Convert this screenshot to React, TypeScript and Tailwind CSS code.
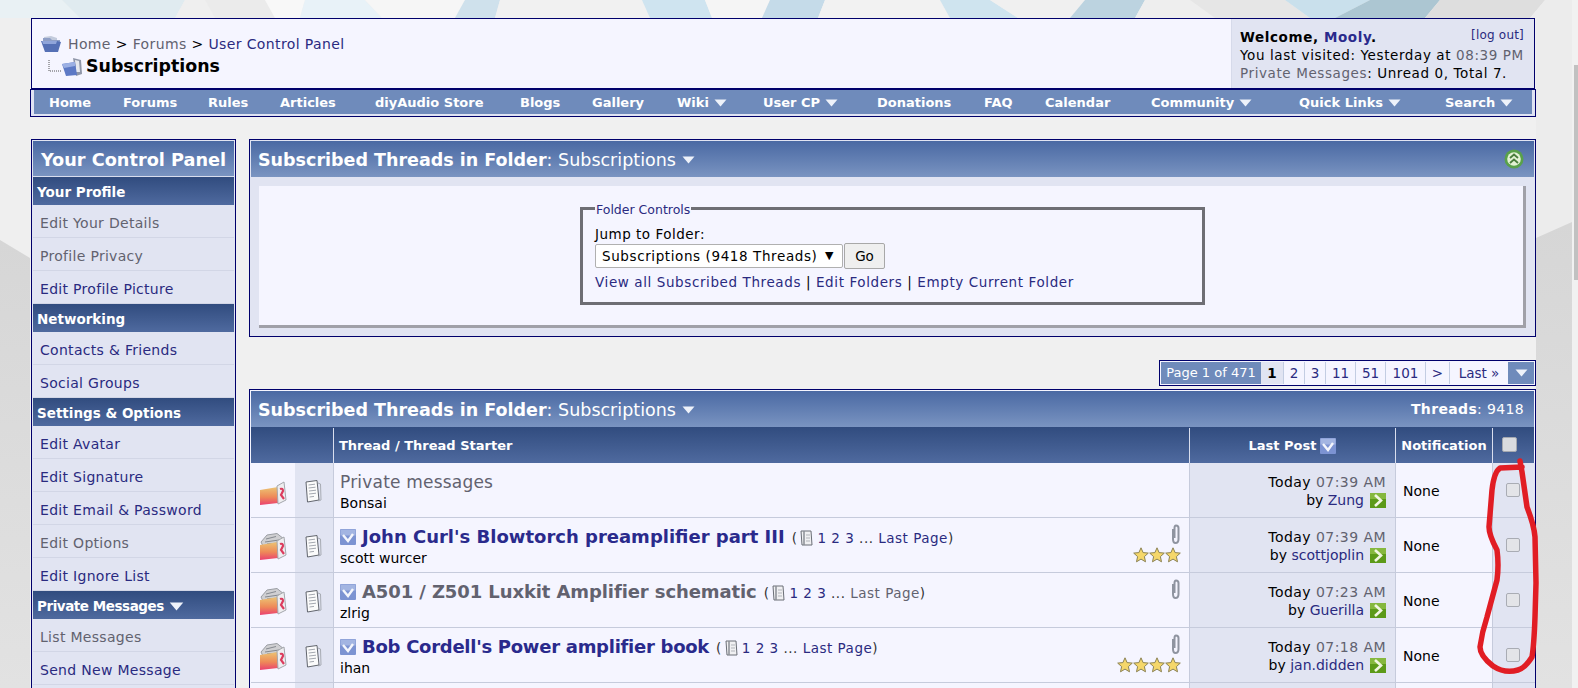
import React from 'react';

const bgStripes: [string, string][] = [
  ['0,0 62,0 80,18 0,18', '#e9f1f4'],
  ['62,0 185,0 175,18 80,18', '#e0ebf0'],
  ['185,0 205,0 215,18 175,18', '#efefef'],
  ['205,0 265,0 275,18 215,18', '#ebebeb'],
  ['265,0 305,0 300,18 275,18', '#f8f8f8'],
  ['305,0 365,0 382,18 300,18', '#e8f2f8'],
  ['365,0 465,0 455,18 382,18', '#f6f6f6'],
  ['465,0 500,0 495,18 455,18', '#cfe1ec'],
  ['500,0 642,0 650,18 495,18', '#f1f1f1'],
  ['642,0 705,0 712,18 650,18', '#cfe4f0'],
  ['705,0 770,0 762,18 712,18', '#f5f5f5'],
  ['770,0 825,0 818,18 762,18', '#c5dbe9'],
  ['825,0 940,0 950,18 818,18', '#f2f2f2'],
  ['940,0 990,0 1018,18 950,18', '#cfe4ef'],
  ['990,0 1085,0 1070,18 1018,18', '#f0f0f0'],
  ['1085,0 1145,0 1135,18 1070,18', '#bcd3e0'],
  ['1145,0 1190,0 1215,18 1135,18', '#eeeeee'],
  ['1190,0 1285,0 1310,18 1215,18', '#e6e6e6'],
  ['1285,0 1370,0 1335,18 1310,18', '#c9e0ec'],
  ['1370,0 1440,0 1425,18 1335,18', '#acc6d2'],
  ['1440,0 1545,0 1530,18 1425,18', '#dedede'],
  ['1545,0 1572,0 1572,18 1530,18', '#ececec'],
];

const navItems = [
  { label: 'Home', width: 'w-[74px]' },
  { label: 'Forums', width: 'w-[85px]' },
  { label: 'Rules', width: 'w-[72px]' },
  { label: 'Articles', width: 'w-[95px]' },
  { label: 'diyAudio Store', width: 'w-[145px]' },
  { label: 'Blogs', width: 'w-[72px]' },
  { label: 'Gallery', width: 'w-[85px]' },
  { label: 'Wiki', width: 'w-[86px]', menu: true },
  { label: 'User CP', width: 'w-[114px]', menu: true },
  { label: 'Donations', width: 'w-[107px]' },
  { label: 'FAQ', width: 'w-[61px]' },
  { label: 'Calendar', width: 'w-[106px]' },
  { label: 'Community', width: 'w-[148px]', menu: true },
  { label: 'Quick Links', width: 'w-[146px]', menu: true },
  { label: 'Search', width: 'w-[86px]', menu: true },
];

const sideGroups = [
  {
    title: 'Your Profile',
    items: [
      { label: 'Edit Your Details', seen: true },
      { label: 'Profile Privacy', seen: true },
      { label: 'Edit Profile Picture' },
    ],
  },
  {
    title: 'Networking',
    items: [{ label: 'Contacts & Friends' }, { label: 'Social Groups' }],
  },
  {
    title: 'Settings & Options',
    items: [
      { label: 'Edit Avatar' },
      { label: 'Edit Signature' },
      { label: 'Edit Email & Password' },
      { label: 'Edit Options', seen: true },
      { label: 'Edit Ignore List' },
    ],
  },
  {
    title: 'Private Messages',
    menu: true,
    items: [{ label: 'List Messages', seen: true }, { label: 'Send New Message' }, { label: '\u00a0' }],
  },
];

const pageCells = [
  { label: '2', width: 'w-[21px]' },
  { label: '3', width: 'w-[21px]' },
  { label: '11', width: 'w-[30px]' },
  { label: '51', width: 'w-[30px]' },
  { label: '101', width: 'w-[40px]' },
  { label: '>', width: 'w-[24px]' },
  { label: 'Last »', width: 'w-[59px]' },
];

const threads = [
  { title: 'Private messages', starter: 'Bonsai', time: '07:39 AM', by: 'Zung', plain: true, seen: true, stars: 0, clip: false, fit: '' },
  { title: "John Curl's Blowtorch preamplifier part III", starter: 'scott wurcer', time: '07:39 AM', by: 'scottjoplin', stars: 3, clip: true, fit: '' },
  { title: 'A501 / Z501 Luxkit Amplifier schematic', starter: 'zlrig', time: '07:23 AM', by: 'Guerilla', seen: true, stars: 0, clip: true, fit: 'tracking-[-0.1px]' },
  { title: "Bob Cordell's Power amplifier book", starter: 'ihan', time: '07:18 AM', by: 'jan.didden', stars: 4, clip: true, fit: 'tracking-[-0.27px]' },
];

const Arrow = ({ className = 'w-[13px] h-[8px]' }: { className?: string }) => (
  <svg className={className} viewBox="0 0 13 8">
    <path d="M0.5 0.5 H12.5 L6.5 7.5 Z" fill="#eef2fa" />
  </svg>
);

const FolderOpen = ({ className }: { className: string }) => (
  <svg className={className} viewBox="0 0 20 17">
    <path d="M3 1 L10 0 L16 2 V10 H3 Z" fill="#c3cbdc" />
    <path d="M2 2 H9 L11 4 H19 V8 H2 Z" fill="#8f9fc6" />
    <path d="M0 5 H16 L20 6 L17 16 H4 Z" fill="#5570b5" />
    <path d="M1 5 H16 L15 8 H2 Z" fill="#90a5da" />
  </svg>
);

const FolderSub = ({ className }: { className: string }) => (
  <svg className={className} viewBox="0 0 22 20">
    <path d="M12 1 L20 3 L21 17 L15 19 Z" fill="#8f96a8" />
    <path d="M14 3 L18 4 L19 15 L15 15 Z" fill="#e6e8ee" />
    <path d="M1 7 L14 5 L16 18 L5 19 Z" fill="#5d79c5" />
    <path d="M1 7 L14 5 L14 9 L3 11 Z" fill="#9cb0e4" />
  </svg>
);

const StatusIcon = ({ plain }: { plain?: boolean }) => (
  <svg className="w-[28px] h-[27px]" viewBox="0 0 28 27">
    <defs>
      <linearGradient id="mail" x1="0" y1="0" x2="0" y2="1">
        <stop offset="0" stopColor="#ecc474" />
        <stop offset="0.55" stopColor="#ee8a58" />
        <stop offset="1" stopColor="#ea4070" />
      </linearGradient>
    </defs>
    {!plain && <path d="M2 9 L8 2 L18 0.5 L25 6 L24 13 L4 13 Z" fill="#cfcfd2" stroke="#9a9da3" strokeWidth="1" />}
    {!plain && <path d="M7 6 L17 3.5 M6 9 L20 7 M8 11 L20 10" fill="none" stroke="#85898f" strokeWidth="1" />}
    <path d="M1 12 L19 9 V25 L1 27 Z" fill="url(#mail)" />
    <path d="M18 8 L25 4 L27 22 L19 26 Z" fill="#eeeef0" stroke="#a4a7ad" strokeWidth="1" />
    <path d="M21 11 Q24 10 24 13 L22 17 L25 21" fill="none" stroke="#dc3c5e" strokeWidth="2.2" />
  </svg>
);

const DocIcon = () => (
  <svg className="w-[18px] h-[23px]" viewBox="0 0 18 23">
    <path d="M1 2 L12 0.5 L14 20 L2.5 22 Z" fill="#fbfbfb" stroke="#62666e" strokeWidth="1" />
    <path d="M13 3 L15.5 4 L16 20 L13.5 21" fill="none" stroke="#a8acb4" strokeWidth="1" />
    <path d="M3.5 5 L10 4.2 M3.5 8 L10.5 7.2 M4 11 L11 10.2 M4 14 L11 13.2 M4.5 17 L9 16.4" stroke="#a4a8b0" strokeWidth="1" />
  </svg>
);

const TinyDoc = () => (
  <svg className="inline-block w-[14px] h-[16px] mx-[3px] align-[-3px]" viewBox="0 0 14 16">
    <path d="M1 1 H11 L12 15 H2 Z" fill="#f0f0f2" stroke="#6a6e76" strokeWidth="1" />
    <path d="M4 1 V15" stroke="#8b8f96" strokeWidth="1.5" />
    <path d="M6 5 H10 M6 8 H10 M6 11 H10" stroke="#b2b5bb" strokeWidth="1" />
  </svg>
);

const CheckIcon = ({ className = 'w-[16px] h-[16px]' }: { className?: string }) => (
  <svg className={className} viewBox="0 0 16 16">
    <rect width="16" height="16" rx="1" fill="#7c93d2" />
    <rect x="0.5" y="0.5" width="15" height="6" fill="#a3b5e2" />
    <path d="M3 6 L8 12 L13 5" fill="none" stroke="#f4f6fc" strokeWidth="2.4" />
  </svg>
);

const Star = () => (
  <svg className="w-[16px] h-[16px]" viewBox="0 0 16 16">
    <path
      d="M8 0.8 L10.1 5.6 L15.3 6.1 L11.4 9.6 L12.5 14.8 L8 12.1 L3.5 14.8 L4.6 9.6 L0.7 6.1 L5.9 5.6 Z"
      fill="#f5d76a"
      stroke="#8c8354"
      strokeWidth="1"
    />
  </svg>
);

const Clip = () => (
  <svg className="w-[11px] h-[21px]" viewBox="0 0 11 21">
    <path
      d="M3 5 V15 Q3 19 5.5 19 Q8.5 19 8.5 15 V4 Q8.5 1.5 6 1.5 Q4.5 1.5 4.5 4 V14"
      fill="none"
      stroke="#8f94a0"
      strokeWidth="2"
    />
  </svg>
);

const GoArrow = () => (
  <svg className="w-[16px] h-[15px] shrink-0" viewBox="0 0 16 15">
    <rect width="16" height="15" fill="#5c9a18" />
    <rect width="16" height="6" fill="#86b83e" />
    <path d="M5 2 L11 7.5 L5 13" fill="none" stroke="#f2f6e2" strokeWidth="2.6" />
  </svg>
);

const Collapse = () => (
  <svg className="w-[20px] h-[20px]" viewBox="0 0 20 20">
    <circle cx="10" cy="10" r="9.5" fill="#59a14a" />
    <circle cx="10" cy="10" r="6.8" fill="#e3f2d4" />
    <path d="M6 9 L10 5.5 L14 9 M6 14 L10 10.5 L14 14" fill="none" stroke="#4a7d3c" strokeWidth="1.8" />
  </svg>
);

const Box = ({ dark }: { dark?: boolean }) => (
  <span
    className={
      dark
        ? 'block w-[15px] h-[15px] rounded-[2px] border border-[#a4a8b0] bg-[#d9dbdf]'
        : 'block w-[14px] h-[14px] rounded-[2px] border border-[#a9acb4] bg-[#e3e4e8]'
    }
  />
);

const BarTitle = ({ right }: { right?: React.ReactNode }) => (
  <div className="flex h-[36px] items-center justify-between bg-linear-to-b from-[#4a69a3] to-[#7a94c1] pl-[7px] pr-[10px] text-white">
    <div className="flex items-center gap-[6px] pt-[2px] text-[17.5px]">
      <span>
        <b>Subscribed Threads in Folder</b>: Subscriptions
      </span>
      <Arrow />
    </div>
    {right}
  </div>
);

const Sidebar = () => (
  <aside className="w-[205px] shrink-0 border border-[#00006b] bg-[#e1e4f2] p-px">
    <div className="flex h-[36px] items-center justify-center border-b border-[#d9deee] bg-linear-to-b from-[#4a69a3] to-[#7a94c1] pt-[3px] text-[17.7px] font-bold text-white">
      Your Control Panel
    </div>
    {sideGroups.map((group) => (
      <div key={group.title}>
        <div className="flex h-[28px] items-center gap-[5px] bg-linear-to-b from-[#314c7f] to-[#4f6a9f] pl-[4px] pt-[2px] text-[13.5px] font-bold text-white">
          <span className={group.menu ? 'tracking-[-0.45px]' : ''}>{group.title}</span>
          {group.menu && <Arrow className="w-[15px] h-[9px]" />}
        </div>
        {group.items.map((item) => (
          <div
            key={item.label}
            className={
              item.seen
                ? 'flex h-[33px] items-center border-b border-[#d2d6e6] pl-[7px] pt-[4px] text-[14px] tracking-[0.3px] text-[#62626f]'
                : 'flex h-[33px] items-center border-b border-[#d2d6e6] pl-[7px] pt-[4px] text-[14px] tracking-[0.3px] text-[#2a2a80]'
            }
          >
            {item.label}
          </div>
        ))}
      </div>
    ))}
  </aside>
);

const Pager = () => (
  <div className="flex h-[26px] self-end border border-[#00006b] bg-[#f5f5ff] p-px text-[13.5px]">
    <div className="flex w-[100px] items-center justify-center bg-[#6f8bbb] text-[13px] text-white">Page 1 of 471</div>
    <div className="flex w-[22px] items-center justify-center bg-[#e1e4f2] font-bold text-black">1</div>
    {pageCells.map((cell) => (
      <div key={cell.label} className={`${cell.width} flex items-center justify-center border-l border-[#c3cde2] text-[#2a2a80]`}>
        {cell.label}
      </div>
    ))}
    <div className="flex w-[26px] items-center justify-center bg-[#6f8bbb]">
      <Arrow />
    </div>
  </div>
);

const rowGrid = 'grid grid-cols-[44px_38px_856px_206px_97px_43px]';

const ThreadRow = ({ thread }: { thread: (typeof threads)[number] }) => (
  <div className={`${rowGrid} h-[55px] text-[14px]`}>
    <div className="flex items-center justify-center border-b border-[#c6cbdc] pt-[3px]">
      <StatusIcon plain={thread.plain} />
    </div>
    <div className="flex items-center justify-center border-b border-[#c6cbdc] bg-[#e1e4f2] pt-[3px]">
      <DocIcon />
    </div>
    <div className="flex items-start justify-between border-b border-l border-[#c6cbdc] pl-[6px] pr-[8px] pt-[6px]">
      <div>
        <div className="flex h-[24px] items-center pt-[1px]">
          {!thread.plain && <CheckIcon className="mr-[6px] w-[16px] h-[16px]" />}
          {thread.plain ? (
            <span className="pt-[3px] text-[17px] tracking-[0.2px] text-[#62626f]">{thread.title}</span>
          ) : (
            <span className={thread.seen ? `text-[18px] font-bold text-[#62626f] ${thread.fit}` : `text-[18px] font-bold text-[#2a2a8c] ${thread.fit}`}>
              {thread.title}
            </span>
          )}
          {!thread.plain && (
            <span className="ml-[7px] pt-[4px] text-[13.5px] tracking-[0.5px] text-[#333]">
              (<TinyDoc />
              <span className="text-[#2a2a80]">1 2 3</span> ...{' '}
              <span className={thread.seen ? 'text-[#62626f]' : 'text-[#2a2a80]'}>Last Page</span>)
            </span>
          )}
        </div>
        <div className="text-[14px] leading-[20px] text-black">{thread.starter}</div>
      </div>
      <div className="flex flex-col items-end">
        {thread.clip && <Clip />}
        {thread.stars > 0 && (
          <div className="flex pt-[2px]">
            {Array.from({ length: thread.stars }).map((_, i) => (
              <Star key={i} />
            ))}
          </div>
        )}
      </div>
    </div>
    <div className="flex flex-col items-end justify-center border-b border-l border-[#c6cbdc] bg-[#e1e4f2] pr-[9px] pt-[2px] leading-[18px]">
      <div className="tracking-[0.45px] text-black">
        Today <span className="text-[#62626f]">{thread.time}</span>
      </div>
      <div className="flex items-center gap-[6px]">
        <span className="text-black">
          by <span className="text-[#2a2a80]">{thread.by}</span>
        </span>
        <GoArrow />
      </div>
    </div>
    <div className="flex items-center border-b border-l border-[#c6cbdc] pl-[7px] pt-[3px] text-black">None</div>
    <div className="flex items-center justify-center border-b border-l border-[#c6cbdc] bg-[#e1e4f2] pr-[3px]">
      <Box />
    </div>
  </div>
);

const App = () => (
  <div className="flex h-[688px] w-[1578px] overflow-hidden font-['DejaVu_Sans',sans-serif] text-[14px]">
    <div className="relative w-[1572px] bg-[#ebebeb]">
      {/* page wallpaper */}
      <svg className="absolute inset-0 w-[1572px] h-[688px]" viewBox="0 0 1572 688">
        <defs>
          <linearGradient id="wall" x1="0" y1="0" x2="0" y2="1">
            <stop offset="0" stopColor="#d6d6d6" />
            <stop offset="1" stopColor="#e2e2e2" />
          </linearGradient>
        </defs>
        <rect width="1572" height="688" fill="#efefef" />
        <rect x="1536" y="0" width="36" height="240" fill="#ececec" />
        <polygon points="0,240 30,258 30,688 0,688" fill="url(#wall)" />
        <polygon points="1536,238 1572,222 1572,688 1536,688" fill="url(#wall)" />
        {bgStripes.map(([points, fill]) => (
          <polygon key={points} points={points} fill={fill} />
        ))}
      </svg>

      <div className="relative ml-[30px] mr-[36px] mt-[18px] h-[670px] bg-[#f0f0f0]">
        <header className="ml-px mr-px flex h-[71px] border border-[#00006b] bg-[#f5f5ff]">
          <div className="flex-1 pl-[9px] pt-[15px]">
            <div className="flex h-[21px] items-center gap-[7px] text-[14px] tracking-[0.38px] text-[#62626f]">
              <FolderOpen className="w-[20px] h-[17px]" />
              <span>
                Home <span className="text-black">&gt;</span> Forums <span className="text-black">&gt;</span>{' '}
                <span className="text-[#2a2a80]">User Control Panel</span>
              </span>
            </div>
            <div className="flex h-[23px] items-center pl-[7px] text-[17.4px] font-bold text-black">
              <svg className="w-[13px] h-[16px]" viewBox="0 0 13 16">
                <path d="M1 1 V12 H13" fill="none" stroke="#555" strokeDasharray="1 1" />
              </svg>
              <FolderSub className="w-[22px] h-[20px] mr-[3px]" />
              Subscriptions
            </div>
          </div>
          <div className="relative w-[303px] border-l border-[#d6daea] bg-[#e1e4f2] pl-[8px] pt-[9px] text-[13.5px] leading-[18px] tracking-[0.6px] text-black">
            <span className="absolute right-[10px] top-[7px] text-[12px] tracking-[0.2px] text-[#2a2a80]">[log out]</span>
            <div className="font-bold">
              Welcome, <span className="text-[#2a2a8c]">Mooly</span>.
            </div>
            <div>
              You last visited: Yesterday at <span className="text-[#62626f]">08:39 PM</span>
            </div>
            <div>
              <span className="text-[#62626f]">Private Messages</span>: Unread 0, Total 7.
            </div>
          </div>
        </header>

        <nav className="flex h-[28px] border border-[#00006b] bg-[#dfe3f3] pb-[2px] pl-[3px] pr-[3px]">
          <div className="flex flex-1 items-center bg-[#6f8bbb] pl-[15px] pt-[2px] text-[13px] font-bold text-white">
            {navItems.map((item) => (
              <div key={item.label} className={`${item.width} flex shrink-0 items-center gap-[5px]`}>
                {item.label}
                {item.menu && <Arrow />}
              </div>
            ))}
          </div>
        </nav>

        <div className="mt-[22px] flex">
          <div className="ml-px">
            <Sidebar />
          </div>
          <main className="ml-[13px] flex w-[1287px] flex-col">
            <section className="h-[198px] border border-[#00006b] bg-[#e1e4f2] p-px">
              <BarTitle right={<Collapse />} />
              <div className="mx-[8px] mt-[9px] h-[142px] border-b-[3px] border-r-[3px] border-b-[#a0a0a8] border-r-[#a0a0a8] bg-[#f5f5ff] pt-[13px]">
                <fieldset className="ml-[321px] h-[106px] w-[625px] border-[3px] border-[#6e6e74] px-[12px] pt-[5px]">
                  <legend className="px-[1px] text-[12.5px] text-[#2a2a80]">
                    <span className="inline-block translate-y-[2px]">Folder Controls</span>
                  </legend>
                  <div className="pt-[2px] text-[13.5px] leading-[18px] tracking-[0.5px] text-black">Jump to Folder:</div>
                  <div className="flex items-center">
                    <div className="flex h-[24px] w-[248px] items-center justify-between rounded-[2px] border border-[#b0b0b0] bg-white pl-[6px] pr-[8px] text-[13.5px] tracking-[0.6px] text-black">
                      Subscriptions (9418 Threads)
                      <span className="text-[11px]">▼</span>
                    </div>
                    <button className="ml-px h-[26px] w-[41px] rounded-[2px] border border-[#a8a8a8] bg-[#efefef] text-[13.5px] text-black">
                      Go
                    </button>
                  </div>
                  <div className="pt-[3px] text-[13.5px] tracking-[0.6px] text-black">
                    <span className="text-[#2a2a80]">View all Subscribed Threads</span> |{' '}
                    <span className="text-[#2a2a80]">Edit Folders</span> |{' '}
                    <span className="text-[#2a2a80]">Empty Current Folder</span>
                  </div>
                </fieldset>
              </div>
            </section>

            <div className="mt-[23px]">
              <div className="flex justify-end">
                <Pager />
              </div>
            </div>

            <section className="mt-[3px] border border-[#00006b] bg-[#f5f5ff] p-px">
              <BarTitle
                right={
                  <span className="text-[14px] tracking-[0.35px] text-white">
                    <b>Threads</b>: 9418
                  </span>
                }
              />
              <div className={`${rowGrid} h-[36px] bg-linear-to-b from-[#314c7f] to-[#4f6a9f] pt-[1px] text-white`}>
                <div />
                <div />
                <div className="flex items-center border-l border-[#d9deee] pl-[5px] text-[13px] font-bold">
                  Thread / Thread Starter
                </div>
                <div className="flex items-center justify-center gap-[4px] border-l border-[#d9deee] text-[13px] font-bold">
                  Last Post
                  <CheckIcon />
                </div>
                <div className="flex items-center justify-center border-l border-[#d9deee] text-[13px] font-bold">
                  Notification
                </div>
                <div className="flex items-center justify-center border-l border-[#d9deee] pb-[3px] pr-[9px]">
                  <Box dark />
                </div>
              </div>
              {threads.map((thread) => (
                <ThreadRow key={thread.title} thread={thread} />
              ))}
              <div className={`${rowGrid} h-[20px]`}>
                <div />
                <div className="bg-[#e1e4f2]" />
                <div className="border-l border-[#c6cbdc]" />
                <div className="border-l border-[#c6cbdc] bg-[#e1e4f2]" />
                <div className="border-l border-[#c6cbdc]" />
                <div className="border-l border-[#c6cbdc] bg-[#e1e4f2]" />
              </div>
            </section>
          </main>
        </div>
      </div>

      {/* red marker scribble around the row checkboxes */}
      <svg className="pointer-events-none absolute left-0 top-0 w-[1572px] h-[688px]" viewBox="0 0 1572 688">
        <path
          d="M1520 461 L1522 472 L1527 507 Q1534 525 1535 537 L1536 583 L1535 617 Q1534 645 1532 657 Q1525 668 1518 670 Q1505 674 1493 666 Q1480 656 1480 647 Q1482 632 1487 617 L1497 580 Q1499 565 1497 550 Q1489 535 1489 527 L1492 490 Q1494 472 1500 468 L1522 467"
          fill="none"
          stroke="#e11d24"
          strokeWidth="5.5"
          strokeLinejoin="round"
          strokeLinecap="round"
        />
      </svg>
    </div>

    {/* browser scrollbar */}
    <div className="w-[6px] bg-[#f1f1f1] pl-[2px] pt-[65px]">
      <div className="h-[215px] bg-[#c1c1c1]" />
    </div>
  </div>
);

export default App;
